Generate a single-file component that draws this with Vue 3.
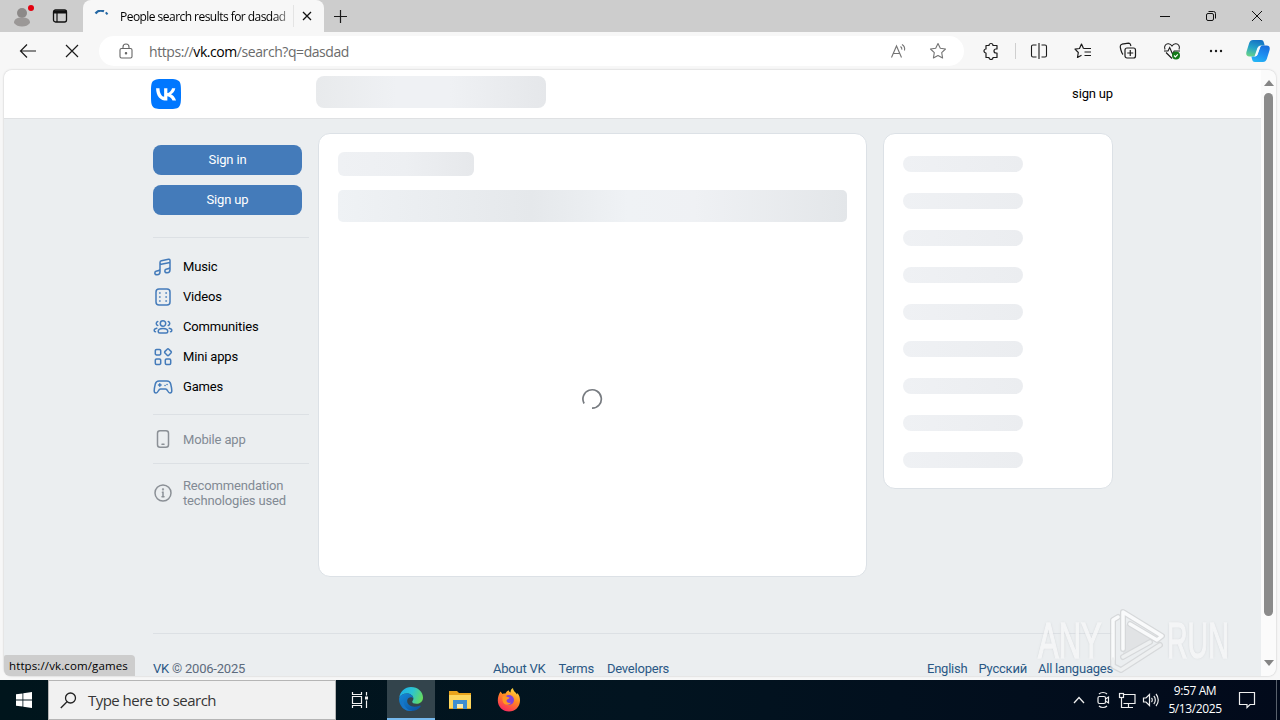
<template>
  <div class="desktop">
    <div class="tabstrip">
      <div class="profile">
        <svg width="34" height="32" viewBox="0 0 34 32">
          <circle cx="16" cy="13" r="5" fill="#8c8988" />
          <path d="M8 23c0-4 3-5.500 8-5.500s8 1.500 8 5.500c-2 2.500-4.500 3.500-8 3.500S10 25.500 8 23z" fill="#9b9897" />
          <circle cx="25" cy="8" r="3" fill="#e3000f" />
        </svg>
      </div>
      <div class="tabs-menu">
        <svg width="16" height="16" viewBox="0 0 16 16" fill="none" stroke="#111">
          <rect x="1.500" y="2" width="13" height="12" rx="2" stroke-width="1.300" />
          <path d="M1.500 4h13" stroke-width="3" />
          <path d="M5 5v9" stroke-width="1.200" />
        </svg>
      </div>
      <div class="tab">
        <svg class="tab__spinner" width="16" height="16" viewBox="0 0 16 16" fill="none" stroke="#2467a3" stroke-width="2.200">
          <path d="M2.500 3.500C4.500 .8 8 0 11 1.300" />
          <path d="M12.800 2.300l1.700 2" stroke-width="2" />
        </svg>
        <span class="tab__title">People search results for dasdad</span>
        <span class="tab__sep"></span>
        <svg class="tab__close" width="10" height="10" viewBox="0 0 10 10" stroke="#111" stroke-width="1.300"><path d="M1 1l8 8M9 1L1 9" /></svg>
      </div>
      <svg class="new-tab" width="15" height="15" viewBox="0 0 15 15" stroke="#1a1a1a" stroke-width="1.200"><path d="M7.500 1v13M1 7.500h13" /></svg>
      <div class="window-buttons">
        <svg width="46" height="32" viewBox="0 0 46 32" stroke="#111" fill="none"><path d="M18 16.500h10" /></svg>
        <svg width="46" height="32" viewBox="0 0 46 32" stroke="#111" fill="none">
          <rect x="18.500" y="13.500" width="7" height="7" rx="1.500" />
          <path d="M20.500 11.500h5a2 2 0 0 1 2 2v5" />
        </svg>
        <svg width="46" height="32" viewBox="0 0 46 32" stroke="#111" fill="none"><path d="M18 11l10 10M28 11L18 21" /></svg>
      </div>
    </div>

    <div class="toolbar">
      <svg class="toolbar__back" width="18" height="16" viewBox="0 0 18 16" fill="none" stroke="#1b1b1b" stroke-width="1.200"><path d="M17 8H1.500M8 1.500L1.500 8 8 14.500" /></svg>
      <svg class="toolbar__stop" width="14" height="14" viewBox="0 0 14 14" stroke="#1b1b1b" stroke-width="1.200"><path d="M1 1l12 12M13 1L1 13" /></svg>
      <div class="address">
        <svg width="14" height="16" viewBox="0 0 14 16" fill="none" stroke="#666" stroke-width="1.100">
          <rect x="1" y="5.500" width="12" height="9.500" rx="1.500" />
          <path d="M4 5.500V4a3 3 0 0 1 6 0v1.500" />
          <circle cx="7" cy="10.300" r=".7" fill="#666" />
        </svg>
        <span class="address__url">https://<b>vk.com</b>/search?q=dasdad</span>
        <svg class="address__read" width="18" height="16" viewBox="0 0 18 16" fill="none" stroke="#747474" stroke-width="1.100">
          <path d="M1.500 14.500L6.500 3l5 11.500M3.300 10.500h6.400M10.500 3.500c1 .7 1.500 2 1.300 3.200M12 1.500c2 1.300 3 3.800 2.500 6" />
        </svg>
        <svg class="address__star" width="18" height="18" viewBox="0 0 18 18" fill="none" stroke="#747474" stroke-width="1.100" stroke-linejoin="round"><path :d="starPath" /></svg>
      </div>
      <div class="tool tool--puzzle">
        <svg width="18" height="18" viewBox="0 0 18 18" fill="none" stroke="#1b1b1b" stroke-width="1.200" stroke-linejoin="round">
          <path d="M4 3.500h3a2 2 0 1 1 4 0h4v3.500h-1a2 2 0 0 0 0 4h1v4.500h-4a2 2 0 0 1-4 0H4V11a2 2 0 1 1 0-4z" />
        </svg>
      </div>
      <div class="tool-sep"></div>
      <div class="tool">
        <svg width="18" height="18" viewBox="0 0 18 18" fill="none" stroke="#1b1b1b" stroke-width="1.100"><path d="M6.500 3H3a1.500 1.500 0 0 0-1.500 1.500v9A1.500 1.500 0 0 0 3 15h3.500M11.500 3H15a1.500 1.500 0 0 1 1.500 1.500v9A1.500 1.500 0 0 1 15 15h-3.500M9 1v16" /></svg>
      </div>
      <div class="tool">
        <svg width="18" height="18" viewBox="0 0 18 18" fill="none" stroke="#1b1b1b" stroke-width="1.200" stroke-linejoin="round">
          <path d="M9.500 6.500L7.500 2 5.500 6.500l-4.500.7 3.300 3.300-.8 5 4-2.200M9.500 6.500H17M10.500 10H17M10.500 13.500H17" />
        </svg>
      </div>
      <div class="tool">
        <svg width="18" height="18" viewBox="0 0 18 18" fill="none" stroke="#1b1b1b" stroke-width="1.200">
          <rect x="6" y="6" width="10.500" height="10" rx="2" />
          <path d="M11.250 8v6M8.250 11h6M4 12.500C2.500 11 1 5.500 1.300 4c.2-1 .7-1.500 1.700-1.800l6.500-1c1 0 1.700.5 2 1.500l.4 1.300" />
        </svg>
      </div>
      <div class="tool">
        <svg width="18" height="18" viewBox="0 0 18 18" fill="none" stroke="#1b1b1b" stroke-width="1.100">
          <path d="M2 7.500C.5 4 3 1.500 5.500 1.800 7.300 2 8.300 3 9 4c.7-1 1.700-2 3.500-2.200C15 1.500 17.500 4 16 7.500M3 10.500l6 6M1 9h4l1.700-3.500L9.500 12l1.700-3H17" />
          <circle cx="13" cy="13.500" r="4" fill="#137a18" stroke="none" />
          <path d="M11 13.500l1.400 1.400 2.400-2.600" stroke="#fff" />
        </svg>
      </div>
      <div class="tool">
        <svg width="18" height="18" viewBox="0 0 18 18" fill="#1b1b1b"><circle cx="4" cy="9" r="1.200" /><circle cx="9" cy="9" r="1.200" /><circle cx="14" cy="9" r="1.200" /></svg>
      </div>
      <div class="copilot">
        <svg width="24" height="24" viewBox="0 0 24 24">
          <defs>
            <linearGradient id="cp-a" x1=".6" y1="0" x2=".3" y2="1"><stop offset="0" stop-color="#1571c4" /><stop offset=".5" stop-color="#25a3c9" /><stop offset="1" stop-color="#67d28a" /></linearGradient>
            <linearGradient id="cp-b" x1=".7" y1="0" x2=".3" y2="1"><stop offset="0" stop-color="#1a6fdd" /><stop offset=".5" stop-color="#1f8df0" /><stop offset="1" stop-color="#24b5f5" /></linearGradient>
          </defs>
          <path d="M7 1h8c2 0 2.500 1 3 3l.7 2.500H15c-2 0-2.700 1-3.200 3L10 15c-.6 2-1.500 2.500-3.500 2.500H3.500C0 17.500-.2 15 .7 12L3.200 4C4 2 5 1 7 1z" fill="url(#cp-a)" />
          <path d="M17 23H9c-2 0-2.500-1-3-3l-.6-2.500H8c2.500 0 3.500-1 4-3L14 9c.6-2 1.500-2.500 3.500-2.500h3C24 6.500 24.200 9 23.300 12l-2.500 8c-.8 2-1.800 3-3.800 3z" fill="url(#cp-b)" />
          <path d="M14.300 7.500L11.500 15c-.5 1.500-1.200 2.500-3 2.500l2.800-8.300c.4-1.300 1.500-1.700 3-1.700z" fill="#f4fbff" />
        </svg>
      </div>
    </div>

    <div class="viewport">
      <div class="page">
        <header class="topbar">
          <svg class="topbar__logo" width="30" height="30" viewBox="0 0 24 24">
            <path d="M1.690 1.690C0 3.370 0 6.090 0 11.520v.96c0 5.430 0 8.150 1.690 9.830C3.370 24 6.090 24 11.520 24h.96c5.430 0 8.150 0 9.830-1.690C24 20.630 24 17.910 24 12.480v-.96c0-5.430 0-8.150-1.690-9.830C20.630 0 17.910 0 12.480 0h-.96C6.090 0 3.370 0 1.690 1.690z" fill="#07f" />
            <path d="M12.770 17.290c-5.470 0-8.590-3.750-8.720-9.990h2.740c.09 4.580 2.110 6.520 3.710 6.920V7.300h2.580v3.950c1.580-.17 3.240-1.970 3.800-3.950h2.580c-.43 2.440-2.230 4.240-3.510 4.980 1.280.6 3.330 2.170 4.110 5.010h-2.840c-.61-1.900-2.130-3.370-4.140-3.570v3.570z" fill="#fff" />
          </svg>
          <div class="bone topbar__search"></div>
          <span class="topbar__signup">sign up</span>
        </header>

        <div class="columns">
          <nav class="side">
            <button class="side__button">Sign in</button>
            <button class="side__button">Sign up</button>
            <ul class="side__menu">
              <li v-for="item in menu" :key="item.label">
                <svg width="20" height="20" viewBox="0 0 20 20" fill="none" stroke="#447bba" stroke-width="1.500" stroke-linejoin="round" stroke-linecap="round">
                  <path :d="item.icon" />
                </svg>
                <span>{{ item.label }}</span>
              </li>
            </ul>
            <div class="side__extra side__extra--mobile">
              <svg width="20" height="20" viewBox="0 0 20 20" fill="none" stroke="#8b9096" stroke-width="1.500" stroke-linecap="round">
                <rect x="4.500" y="1.700" width="11" height="16.600" rx="2.500" />
                <path d="M9 15.300h2" />
              </svg>
              <span>Mobile app</span>
            </div>
            <div class="side__extra side__extra--info">
              <svg width="20" height="20" viewBox="0 0 20 20" fill="none" stroke="#8b9096" stroke-width="1.500" stroke-linecap="round">
                <circle cx="10" cy="10" r="8" />
                <path d="M9.400 9.300h.6v4.200M9 13.700h2" />
                <circle cx="10" cy="6.400" r=".4" />
              </svg>
              <span>Recommendation<br />technologies used</span>
            </div>
          </nav>

          <main class="card feed">
            <div class="bone feed__title"></div>
            <div class="bone feed__input"></div>
            <div class="feed__loading">
              <svg width="22" height="22" viewBox="0 0 22 22" fill="none" stroke="#777b80" stroke-width="1.700">
                <path d="M3.100 15.500A9.200 9.200 0 1 1 11 20.200" />
              </svg>
            </div>
          </main>

          <aside class="card filters">
            <div v-for="n in 9" :key="n" class="bone filters__row"></div>
          </aside>
        </div>

        <footer class="footer">
          <div class="footer__copy"><a>VK</a> © 2006-2025</div>
          <div class="footer__links"><a>About VK</a><a>Terms</a><a>Developers</a></div>
          <div class="footer__langs"><a>English</a><a>Русский</a><a>All languages</a></div>
        </footer>
      </div>
      <div class="scrollbar">
        <svg width="10" height="6" viewBox="0 0 10 6" fill="#858585"><path d="M5 0l5 6H0z" /></svg>
        <div class="scrollbar__thumb"></div>
        <svg width="10" height="6" viewBox="0 0 10 6" fill="#858585"><path d="M5 6l5-6H0z" /></svg>
      </div>
    </div>

    <div class="status">https://vk.com/games</div>

    <div class="watermark">
      <span class="watermark__any">ANY</span>
      <svg width="58" height="64" viewBox="0 0 58 64" fill="none" stroke-linejoin="round" stroke-linecap="round">
        <path d="M14 14v32l33-18z" fill="#e0e2e4" />
        <g stroke="#d3d5d7" stroke-width="6">
          <path d="M14 40V3l39 24-5 4-27-16M4 50V11l5-3M4 50v7l8 4 39-25M14 48l27-15" />
        </g>
        <path d="M14 40V3l39 24-5 4-27-16M4 50V11l5-3" stroke="#fcfdfd" stroke-width="3.500" />
        <path d="M4 50v7l8 4 39-25M14 48l27-15" stroke="#eff1f2" stroke-width="3.500" />
      </svg>
      <span class="watermark__run">RUN</span>
    </div>

    <div class="taskbar">
      <div class="taskbar__start">
        <svg width="16" height="16" viewBox="0 0 16 16" fill="#fff"><path d="M0 2.300l6.500-.9v6.200H0zM7.300 1.300L16 0v7.600H7.300zM0 8.400h6.500v6.200L0 13.700zM7.300 8.400H16V16l-8.700-1.300z" /></svg>
      </div>
      <div class="taskbar__search">
        <svg width="17" height="17" viewBox="0 0 17 17" fill="none" stroke="#222" stroke-width="1.300"><circle cx="10.500" cy="6" r="5" /><path d="M7 9.700L.8 16" /></svg>
        <span>Type here to search</span>
      </div>
      <div class="taskbar__app taskbar__app--view">
        <svg width="18" height="16" viewBox="0 0 18 16" fill="none" stroke="#f2f2f2" stroke-width="1.200"><path d="M1.500 0v2.500h9V0M1.500 16v-2.500h9V16M1.500 4.500h9v7h-9zM15.500 0v3.500M15.500 8.500V16" /><path d="M14 6h3" stroke-width="3" /></svg>
      </div>
      <div class="taskbar__app taskbar__app--active">
        <svg width="24" height="24" viewBox="0 0 24 24">
          <defs>
            <linearGradient id="edge-top" x1="0" y1=".3" x2="1" y2=".6"><stop offset="0" stop-color="#1cb0e8" /><stop offset=".5" stop-color="#2cc3d1" /><stop offset="1" stop-color="#66dc5c" /></linearGradient>
            <linearGradient id="edge-low" x1="0" y1="0" x2="1" y2="1"><stop offset="0" stop-color="#1489d8" /><stop offset="1" stop-color="#0b4f9e" /></linearGradient>
          </defs>
          <path d="M.3 10.500C1.200 4.500 6 0 12 0c7 0 12 5 12 10.500 0 4-3 6.300-6.500 6.300-3 0-4.300-1-4.300-2 0-.8 1.200-1.300 1.200-3.300C14.400 8.500 11 6.500 8 6.500c-4 0-6.500 2-7.700 4z" fill="url(#edge-top)" />
          <path d="M.2 11C1.200 8 4.500 6.400 8 6.400c3 0 6.400 2 6.400 5-1.500-2-5.700-1.500-6.200 2-.6 4.500 5.300 8.200 12.300 5.300.8-.3 1.500.2 1 1C19.500 22.500 16 24 12 24 5 24-.7 18 .2 11z" fill="url(#edge-low)" />
          <path d="M5 12.500c-1.500 5 2.500 10.700 8.500 11.400-6.500.7-11.500-3-11.500-7.400 0-1.800 1-3.200 3-4z" fill="#1776c7" />
        </svg>
      </div>
      <div class="taskbar__app">
        <svg width="22" height="20" viewBox="0 0 22 20"><path d="M0 1h8l2 2h12v16H0z" fill="#e9a41c" /><path d="M0 5h22v13H0z" fill="#fdd75f" /><path d="M4 10h14v9h-4v-5H8v5H4z" fill="#3f8ed0" /><path d="M8 14h6v4H8z" fill="#f6e9b0" /></svg>
      </div>
      <div class="taskbar__app">
        <svg width="24" height="24" viewBox="0 0 24 24">
          <defs>
            <linearGradient id="fox" x1=".8" y1="0" x2=".3" y2="1"><stop offset="0" stop-color="#ffe141" /><stop offset=".45" stop-color="#ff8a22" /><stop offset="1" stop-color="#f9265f" /></linearGradient>
          </defs>
          <path d="M3.500 3.500L5.500 6c1-.5 2-.6 3-.5C9.500 3 11.500 2.500 12 2.500c0 1 .5 1.500 1.500 2C13.500 2 14.500.8 16 0c0 3 3 4.500 4 6.500l.5-1.500c2 2.500 2.500 5 2.500 7.500C23 19 18 23.500 12 23.500S.8 19 .8 12.500c0-3.500 1-6.500 2.700-9z" fill="url(#fox)" />
          <circle cx="12" cy="12" r="5" fill="#7f43d9" />
          <path d="M5.500 8.500c2-1 3.500-.5 5 .5l2 .5c0 1.500-2.500 1.500-3 3 0 2 2.500 3 4.500 2-1.500 3.500-8 3-8.500-2z" fill="#ff9722" />
        </svg>
      </div>
      <div class="tray">
        <svg width="24" height="24" viewBox="0 0 24 24" fill="none" stroke="#eee" stroke-width="1.300"><path d="M7 15l5-5.500 5 5.500" /></svg>
        <svg width="24" height="24" viewBox="0 0 24 24" fill="none" stroke="#eee" stroke-width="1.200"><rect x="7" y="8.500" width="7.500" height="7" rx="1.500" /><path d="M14.500 11l3-2v6l-3-2M8 6c2-2 6-2 8 0M8 18c2 2 6 2 8 0" /></svg>
        <svg width="24" height="24" viewBox="0 0 24 24" fill="none" stroke="#eee" stroke-width="1.200"><path d="M8.500 6.500H20v9H8.500M13.500 15.500v4M9 19.500h9M6.500 10v9.500H9" /><rect x="4.500" y="5.500" width="4" height="4" /></svg>
        <svg width="24" height="24" viewBox="0 0 24 24" fill="none" stroke="#eee" stroke-width="1.200"><path d="M4.500 10H7l3.500-3.500v11L7 14H4.500zM12.500 10c1 1 1 3 0 4M14.800 8c2 2 2 6 0 8M17 6c3 3.500 3 8.500 0 12" /></svg>
        <div class="tray__clock"><span>9:57 AM</span><span>5/13/2025</span></div>
        <svg class="tray__notes" width="18" height="18" viewBox="0 0 18 18" fill="none" stroke="#eee" stroke-width="1.200"><path d="M1.500 1.500h15v12H12l-3 3v-3H1.500z" /></svg>
      </div>
    </div>
  </div>
</template>

<script setup>
const starPath = "M9 1.500l2.300 4.800 5.200.7-3.800 3.700.9 5.300L9 13.500 4.400 16l.9-5.300L1.500 7l5.200-.7z";

const menu = [
  {
    label: "Music",
    icon: "M7 14.800V5.500c0-1 .5-1.500 1.400-1.700l7-1.500c1-.2 1.600.2 1.600 1.200v9.200M7 7.500l10-2.100M7 14.800c0 2-1.300 3-2.800 3S1.800 17 1.800 16s.7-1.700 2-1.900C5.500 13.800 7 13.500 7 12M17 12.700c0 2-1.300 3-2.800 3s-2.400-.8-2.400-1.800.7-1.700 2-1.900c1.700-.3 3.200-.6 3.200-2.100",
  },
  {
    label: "Videos",
    icon: "M6 2h8a3 3 0 0 1 3 3v10a3 3 0 0 1-3 3H6a3 3 0 0 1-3-3V5a3 3 0 0 1 3-3zM6.600 6h.5M6.600 10h.5M6.600 14h.5M12.900 6h.5M12.900 10h.5M12.900 14h.5",
  },
  {
    label: "Communities",
    icon: "M10 3.800a2.700 2.700 0 1 1 0 5.400 2.700 2.700 0 0 1 0-5.400zM10 11.500c3 0 4.800 1.200 4.800 2.900 0 1-.6 1.500-1.600 1.500H6.800c-1 0-1.600-.5-1.600-1.500 0-1.700 1.800-2.900 4.800-2.900zM4.800 4.500a2 2 0 0 0 0 3.900M15.200 4.500a2 2 0 0 1 0 3.900M3.800 11.300c-1.700.3-2.600 1.200-2.600 2.200 0 .8.500 1.300 1.300 1.300M16.200 11.300c1.700.3 2.600 1.200 2.600 2.200 0 .8-.5 1.300-1.300 1.300",
  },
  {
    label: "Mini apps",
    icon: "M3.500 2.500h3a1.200 1.200 0 0 1 1.200 1.200v3a1.200 1.200 0 0 1-1.200 1.200h-3a1.200 1.200 0 0 1-1.200-1.200v-3a1.200 1.200 0 0 1 1.200-1.200zM14.200 2.200q.8-.8 1.600 0l2.200 2.200q.8.8 0 1.600l-2.200 2.200q-.8.800-1.600 0L12 6q-.8-.8 0-1.600zM3.500 12h3a1.200 1.200 0 0 1 1.200 1.200v3a1.200 1.200 0 0 1-1.200 1.200h-3a1.200 1.200 0 0 1-1.200-1.200v-3A1.200 1.200 0 0 1 3.500 12zM13.500 12h3a1.200 1.200 0 0 1 1.200 1.200v3a1.200 1.200 0 0 1-1.200 1.200h-3a1.200 1.200 0 0 1-1.200-1.200v-3a1.200 1.200 0 0 1 1.200-1.200z",
  },
  {
    label: "Games",
    icon: "M6 4h8c2 0 3.200 1 3.700 3 .5 2 1.100 4.700 1.100 6.700 0 1.500-.7 2.300-1.900 2.300-2.300 0-2-4-4.400-4H7.500c-2.400 0-2.100 4-4.400 4-1.200 0-1.900-.8-1.900-2.300 0-2 .6-4.700 1.100-6.700C2.800 5 4 4 6 4zM5.500 8h2.600M6.800 6.700v2.600M12 8.500h.1M14 7.500h.1",
  },
];
</script>

<style>
body {
  margin: 0;
  overflow: hidden;
}
</style>

<style scoped>
.desktop {
  position: relative;
  display: flex;
  flex-direction: column;
  width: 1280px;
  height: 720px;
  overflow: hidden;
  background: #f7f7f7;
  color: #000;
  font-family: "Open Sans", "Noto Sans", sans-serif;
}
svg {
  flex: none;
  display: block;
}

/* browser chrome */
.tabstrip {
  display: flex;
  align-items: center;
  height: 32px;
  background: #cdcdcd;
}
.profile {
  width: 34px;
  margin-left: 6px;
}
.tabs-menu {
  width: 31px;
  margin-left: 12px;
}
.tab {
  display: flex;
  align-items: center;
  box-sizing: border-box;
  width: 241px;
  height: 32px;
  padding-left: 10px;
  background: #f7f7f7;
  border-radius: 8px 8px 0 0;
}
.tab__spinner {
  margin-top: 3px;
}
.tab__title {
  width: 169px;
  margin-left: 11px;
  white-space: nowrap;
  font-size: 12px;
  letter-spacing: -0.54px;
  mask-image: linear-gradient(to right, #000 90%, rgba(0, 0, 0, 0.35));
}
.tab__sep {
  width: 1px;
  height: 22px;
  margin-left: 4px;
  background: #e4e4e4;
}
.tab__close {
  margin-left: 8px;
}
.new-tab {
  margin-left: 9px;
}
.window-buttons {
  display: flex;
  margin-left: auto;
}
.toolbar {
  display: flex;
  align-items: center;
  height: 38px;
  background: #f7f7f7;
}
.toolbar__back {
  margin-left: 19px;
}
.toolbar__stop {
  margin-left: 28px;
}
.address {
  display: flex;
  align-items: center;
  box-sizing: border-box;
  width: 865px;
  height: 30px;
  margin-left: 20px;
  padding: 0 17px 0 20px;
  background: #fff;
  border-radius: 15px;
}
.address__url {
  margin-left: 16px;
  font-size: 14px;
  letter-spacing: -0.43px;
  color: #6b6b6b;
}
.address__url b {
  font-weight: 400;
  color: #000;
}
.address__read {
  margin-left: auto;
}
.address__star {
  margin-left: 21px;
}
.tool {
  display: flex;
  justify-content: center;
  width: 44.200px;
}
.tool--puzzle {
  margin-left: 5px;
}
.tool-sep {
  width: 1px;
  height: 16px;
  margin: 0 1px 0 2px;
  background: #cfcfcf;
}
.copilot {
  margin-left: 8px;
}

/* page */
.viewport {
  display: flex;
  box-sizing: border-box;
  width: 1272px;
  height: 606px;
  margin-left: 4px;
  overflow: hidden;
  background: #ebeef0;
  border-radius: 8px;
  box-shadow: 0 0 2px rgba(0, 0, 0, 0.25);
}
.page {
  width: 1257px;
  font-family: Roboto, "Open Sans", sans-serif;
  font-size: 13px;
  letter-spacing: -0.16px;
}
.topbar {
  display: flex;
  align-items: center;
  box-sizing: border-box;
  height: 49px;
  padding: 0 148px 0 147px;
  background: #fff;
  border-bottom: 1px solid #dfe1e3;
}
.topbar__search {
  width: 230px;
  height: 32px;
  margin: 0 0 4px 135px;
  border-radius: 8px;
  background: linear-gradient(to right, #e8eaec, #eff1f4 35%, #eff1f4 58%, #e5e7ea);
}
.topbar__signup {
  margin-left: auto;
  padding-bottom: 2px;
}
.bone {
  flex: none;
}
.columns {
  display: grid;
  grid-template-columns: 156px 549px 230px;
  align-items: start;
  height: 514px;
  padding-left: 149px;
}
.side {
  padding-top: 26px;
}
.side__button {
  display: block;
  width: 149px;
  height: 30px;
  margin: 0 0 10px;
  padding: 0 0 2px;
  border: 0;
  border-radius: 8px;
  background: #447bba;
  color: #fff;
  font: inherit;
  letter-spacing: inherit;
}
.side__menu {
  display: flex;
  flex-direction: column;
  margin: 22px 0 0;
  padding: 14px 0 12px;
  list-style: none;
  border-top: 1px solid #dce0e4;
}
.side__menu li {
  display: flex;
  align-items: center;
  gap: 10px;
  height: 30px;
}
.side__menu span {
  padding-bottom: 2px;
}
.side__extra {
  display: flex;
  align-items: center;
  gap: 10px;
  border-top: 1px solid #dce0e4;
  color: #828a94;
  line-height: 15px;
}
.side__extra--mobile {
  height: 48px;
}
.side__extra--info {
  height: 58px;
}
.card {
  box-sizing: border-box;
  margin-top: 14px;
  background: #fff;
  border: 1px solid #dce1e6;
  border-radius: 12px;
}
.feed {
  width: 549px;
  height: 444px;
  margin-left: 9px;
  padding: 18px 19px;
}
.feed__title {
  width: 136px;
  height: 24px;
  border-radius: 6px;
  background: linear-gradient(to right, #eff1f4, #edeff2 50%, #e6e8eb);
}
.feed__input {
  height: 32px;
  margin-top: 14px;
  border-radius: 5px;
  background: linear-gradient(to right, #eff2f5, #e5e8eb 38%, #eff2f5 57%, #eff1f4 70%, #e3e6e9);
}
.feed__loading {
  display: flex;
  justify-content: center;
  margin-top: 166px;
  padding-right: 2px;
}
.filters {
  display: flex;
  flex-direction: column;
  gap: 21px;
  width: 230px;
  height: 356px;
  margin-left: 25px;
  padding: 22px 19px;
}
.filters__row {
  width: 120px;
  height: 16px;
  border-radius: 8px;
  background: linear-gradient(to right, #eff1f4, #ebedf0);
}
.footer {
  display: grid;
  grid-template-columns: 340px 1fr auto;
  width: 960px;
  margin-left: 149px;
  padding-top: 27px;
  border-top: 1px solid #dce0e4;
  line-height: 16px;
  letter-spacing: -0.22px;
  color: #5d6b7d;
}
.footer a {
  color: #2a5885;
}
.footer__links {
  display: flex;
  gap: 13px;
}
.footer__langs {
  display: flex;
  gap: 11px;
}
.scrollbar {
  display: flex;
  flex-direction: column;
  align-items: center;
  box-sizing: border-box;
  width: 15px;
  padding: 10px 0;
  background: #fbfbfb;
}
.scrollbar__thumb {
  width: 9px;
  height: 524px;
  margin: 7px 0 44px;
  border-radius: 5px;
  background: #8b8b8b;
}

/* link target bubble */
.status {
  position: absolute;
  left: 4px;
  top: 655px;
  box-sizing: border-box;
  width: 131px;
  height: 21px;
  padding-left: 5px;
  background: #cdcdcd;
  border-radius: 2px 4px 0 6px;
  font-size: 11.500px;
  line-height: 21px;
  letter-spacing: 0.12px;
  white-space: nowrap;
}

.watermark {
  position: absolute;
  left: 1038px;
  top: 609px;
  display: flex;
  align-items: center;
  opacity: 0.85;
  color: #f6f7f8;
  font-family: "Liberation Sans", sans-serif;
  font-size: 50px;
  line-height: 64px;
  text-shadow: 0 0 3px #b9bcbf;
  -webkit-text-stroke: 1.500px #f6f7f8;
}
.watermark span {
  display: block;
  transform-origin: 0 50%;
}
.watermark__any {
  width: 67px;
  transform: scaleX(0.62);
}
.watermark__run {
  width: 62px;
  transform: scaleX(0.57);
}
.watermark svg {
  margin-left: 4px;
}

/* windows taskbar */
.taskbar {
  display: flex;
  align-items: center;
  height: 40px;
  margin-top: auto;
  background: linear-gradient(to right, #00151c, #021420 50%, #020a1b);
}
.taskbar__start {
  display: flex;
  justify-content: center;
  width: 48px;
}
.taskbar__search {
  display: flex;
  align-items: center;
  gap: 11px;
  box-sizing: border-box;
  width: 288px;
  height: 40px;
  padding-left: 11px;
  background: #f1f1f1;
  border: 1px solid #b5b5b5;
  color: #363636;
  font-size: 15px;
  letter-spacing: -0.530px;
}
.taskbar__app {
  display: flex;
  align-items: center;
  justify-content: center;
  box-sizing: border-box;
  width: 49px;
  height: 40px;
}
.taskbar__app--view {
  width: 51px;
  padding-right: 3px;
}
.taskbar__app--active {
  width: 48px;
  background: #33444c;
  border-bottom: 2px solid #76b9ed;
}
.tray {
  display: flex;
  align-items: center;
  height: 40px;
  margin-left: auto;
  margin-right: 3px;
  padding-right: 20px;
  border-right: 1px solid #59616c;
}
.tray__clock {
  display: flex;
  flex-direction: column;
  align-items: center;
  width: 64px;
  color: #fff;
  font-size: 12px;
  line-height: 18px;
  letter-spacing: -0.400px;
}
.tray__notes {
  margin-left: 11px;
}
</style>
